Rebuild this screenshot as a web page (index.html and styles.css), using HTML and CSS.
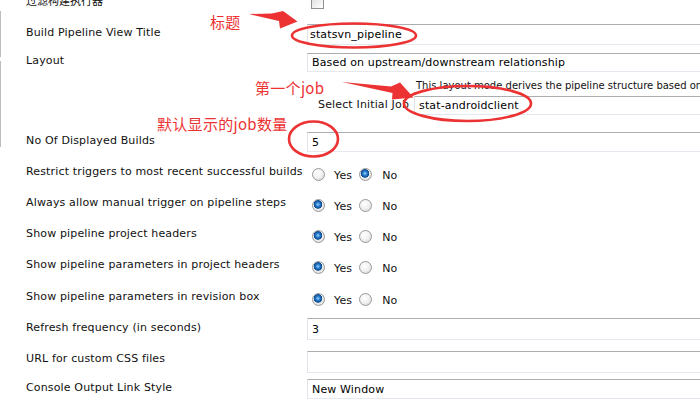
FILE: index.html
```html
<!DOCTYPE html>
<html lang="zh">
<head>
<meta charset="utf-8">
<title>Build Pipeline View</title>
<link rel="stylesheet" href="styles.css">
</head>
<body>
<div class="page">
  <div class="rail">
    <div class="rail-seg seg1"></div>
    <div class="rail-seg seg2"></div>
  </div>
  <div class="form">
    <div class="row r-filter">
      <div class="label cjk">过滤构建执行器</div>
      <div class="value"><input type="checkbox" class="cb"></div>
    </div>
    <div class="row r-title">
      <div class="label">Build Pipeline View Title</div>
      <div class="value"><input class="text pad-s" value="statsvn_pipeline"></div>
    </div>
    <div class="row r-layout">
      <div class="label">Layout</div>
      <div class="value"><select class="text"><option>Based on upstream/downstream relationship</option></select></div>
    </div>
    <div class="row r-desc">
      <div></div>
      <div class="nested">
        <div></div>
        <div class="desc">This layout mode derives the pipeline structure based on the upstream/downstream trigger relationship between jobs.</div>
      </div>
    </div>
    <div class="row r-job">
      <div></div>
      <div class="nested">
        <div class="sub-label">Select Initial Job</div>
        <select class="text"><option>stat-androidclient</option></select>
      </div>
    </div>
    <div class="row r-builds">
      <div class="label">No Of Displayed Builds</div>
      <div class="value"><select class="text"><option>5</option></select></div>
    </div>
    <div class="row r-radio gap14">
      <div class="label">Restrict triggers to most recent successful builds</div>
      <div class="value radios"><input type="radio" name="r1" class="rb"><span class="yes">Yes</span><input type="radio" name="r1" class="rb rb2" checked><span class="no">No</span></div>
    </div>
    <div class="row r-radio gap17">
      <div class="label">Always allow manual trigger on pipeline steps</div>
      <div class="value radios"><input type="radio" name="r2" class="rb" checked><span class="yes">Yes</span><input type="radio" name="r2" class="rb rb2"><span class="no">No</span></div>
    </div>
    <div class="row r-radio gap17">
      <div class="label">Show pipeline project headers</div>
      <div class="value radios"><input type="radio" name="r3" class="rb" checked><span class="yes">Yes</span><input type="radio" name="r3" class="rb rb2"><span class="no">No</span></div>
    </div>
    <div class="row r-radio gap17">
      <div class="label">Show pipeline parameters in project headers</div>
      <div class="value radios"><input type="radio" name="r4" class="rb" checked><span class="yes">Yes</span><input type="radio" name="r4" class="rb rb2"><span class="no">No</span></div>
    </div>
    <div class="row r-radio gap18">
      <div class="label">Show pipeline parameters in revision box</div>
      <div class="value radios"><input type="radio" name="r5" class="rb" checked><span class="yes">Yes</span><input type="radio" name="r5" class="rb rb2"><span class="no">No</span></div>
    </div>
    <div class="row r-refresh">
      <div class="label">Refresh frequency (in seconds)</div>
      <div class="value"><input class="text" value="3"></div>
    </div>
    <div class="row r-url">
      <div class="label label-up">URL for custom CSS files</div>
      <div class="value"><input class="text" value=""></div>
    </div>
    <div class="row r-console">
      <div class="label">Console Output Link Style</div>
      <div class="value"><select class="text"><option>New Window</option></select></div>
    </div>
  </div>

  <svg class="marks" width="700" height="411" viewBox="0 0 700 411" xmlns="http://www.w3.org/2000/svg">
    <g fill="none" stroke="#ec3232" stroke-width="2.6">
      <ellipse cx="354" cy="35.5" rx="62" ry="12"/>
      <ellipse cx="467.5" cy="103.5" rx="63.5" ry="17.5"/>
      <ellipse cx="313.5" cy="139" rx="24.5" ry="17.5"/>
    </g>
    <g fill="#ec3232">
      <polygon points="249,14 272,13.5 283,11 297.5,21.5 280,28.5 279,21"/>
      <polygon points="342,82 391,86.5 400,82.5 413.5,97.5 392,99.5 392.5,93"/>
    </g>
  </svg>
  <div class="note note-title">标题</div>
  <div class="note note-job">第一个job</div>
  <div class="note note-count">默认显示的job数量</div>
</div>
</body>
</html>
```

FILE: styles.css
```css
html, body {
  margin: 0;
  padding: 0;
  background: #ffffff;
}

body {
  width: 700px;
  height: 411px;
  overflow: hidden;
  font-family: "DejaVu Sans", Verdana, sans-serif;
  font-size: 11px;
  letter-spacing: 0.15px;
  color: #111111;
}

.page {
  position: relative;
  display: flex;
  width: 700px;
  height: 411px;
  overflow: hidden;
}

.rail {
  flex: none;
  width: 1px;
  display: flex;
  flex-direction: column;
}

.rail-seg {
  width: 1px;
  background: #bdbdbd;
}

.seg1 { margin-top: 11px; height: 46px; }
.seg2 { margin-top: 4px; height: 86px; }

.form {
  flex: 1;
  margin-left: 25px;
  display: flex;
  flex-direction: column;
}

.row {
  display: grid;
  grid-template-columns: 281px 1fr;
  align-items: center;
}

.label {
  white-space: nowrap;
  line-height: 13px;
  margin-top: -4px;
}

.r-radio .label { margin-top: -6px; }
.label-up { margin-top: -7px; }

.cjk {
  font-family: "Noto Sans CJK SC", sans-serif;
  letter-spacing: 0;
}

.value {
  display: flex;
  align-items: center;
  height: 100%;
}

.nested {
  display: grid;
  grid-template-columns: 107px 1fr;
  align-items: center;
  height: 100%;
}

.desc {
  font-size: 10px;
  letter-spacing: 0;
  white-space: nowrap;
  line-height: 12px;
  margin-left: 2px;
}

.sub-label {
  padding-left: 11px;
  white-space: nowrap;
  line-height: 13px;
  margin-top: -2px;
}

.r-filter { margin-top: -4px; height: 13px; }
.r-title { margin-top: 15px; height: 21px; }
.r-layout { margin-top: 8px; height: 19px; }
.r-desc { margin-top: 8px; height: 12px; }
.r-job { margin-top: 4px; height: 19px; }
.r-builds { margin-top: 17px; height: 20px; }
.r-radio { height: 14px; }
.gap14 { margin-top: 14px; }
.gap17 { margin-top: 17px; }
.gap18 { margin-top: 18px; }
.r-refresh { margin-top: 13px; height: 22px; }
.r-url { margin-top: 11px; height: 22px; }
.r-console { margin-top: 6px; height: 20px; }

.text {
  -webkit-appearance: none;
  appearance: none;
  box-sizing: border-box;
  width: 430px;
  height: 100%;
  margin: 0;
  padding: 0 4px;
  border: 1px solid;
  border-color: #abadb3 #dbdfe6 #e3e9ef #e2e3ea;
  border-radius: 0;
  background: #ffffff;
  font-family: "DejaVu Sans", Verdana, sans-serif;
  font-size: 11px;
  letter-spacing: 0.15px;
  color: #000000;
  outline: none;
}

.pad-s { padding-left: 2px; }

.cb {
  -webkit-appearance: none;
  appearance: none;
  box-sizing: border-box;
  width: 13px;
  height: 13px;
  margin: 0 0 0 4px;
  border: 1px solid #8e8f8f;
  background: linear-gradient(135deg, #dcdcdc, #ffffff);
}

.radios {
  font-size: 11px;
}

.rb {
  -webkit-appearance: none;
  appearance: none;
  box-sizing: border-box;
  width: 13px;
  height: 13px;
  margin: 1px 0 0 5px;
  border-radius: 50%;
  border: 1px solid #9a9a9a;
  background: radial-gradient(circle at 40% 35%, #ffffff 0%, #f2f2f2 45%, #d4d4d4 100%);
}

.rb:checked {
  background:
    radial-gradient(circle at 45% 40%, #9fd3ff 0px, #2b7fd0 2px, #0d4a8c 4px, rgba(13,74,140,0) 4.6px),
    radial-gradient(circle at 40% 35%, #ffffff 0%, #f2f2f2 45%, #d4d4d4 100%);
}

.rb2 { margin-left: 7px; }

.yes {
  margin-left: 9px;
  margin-top: 3px;
}

.no {
  margin-left: 10px;
  margin-top: 3px;
}

.marks {
  position: absolute;
  left: 0;
  top: 0;
  pointer-events: none;
}

.note {
  position: absolute;
  font-family: "Noto Sans CJK SC", sans-serif;
  font-size: 15px;
  line-height: 17px;
  letter-spacing: 0.3px;
  color: #ec3232;
  white-space: nowrap;
}

.note-title { left: 210px; top: 13px; }
.note-job { left: 255px; top: 79px; }
.note-count { left: 157px; top: 115px; }
```
